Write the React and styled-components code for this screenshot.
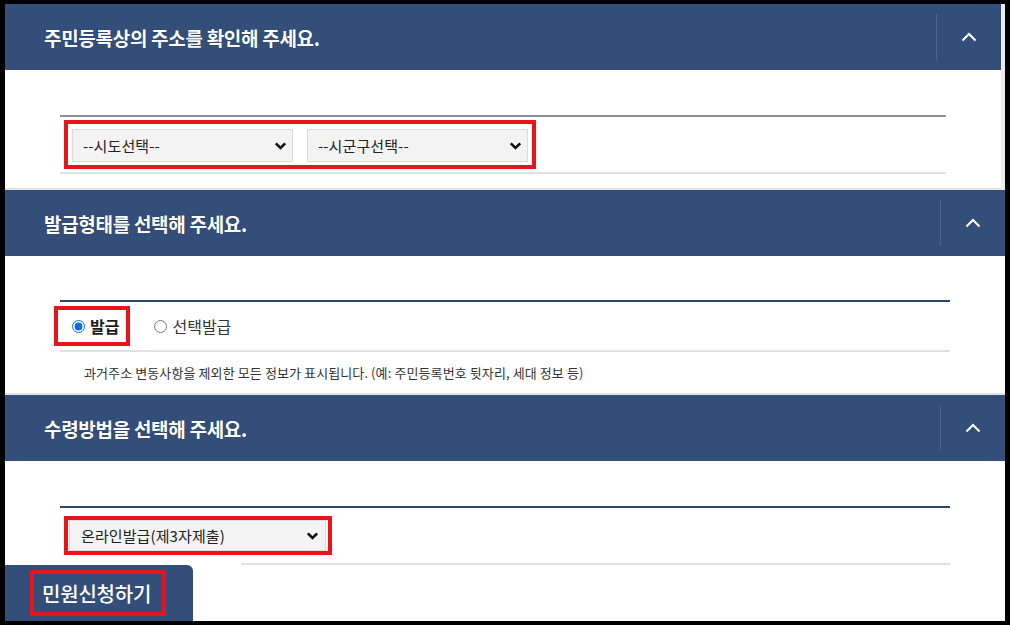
import React from 'react'
import styled, { createGlobalStyle } from 'styled-components'

const GlobalStyle = createGlobalStyle`
  html, body {
    margin: 0;
    padding: 0;
    background: #fff;
  }
  body {
    font-family: "Noto Sans CJK KR", "Noto Sans", sans-serif;
  }
`

const NAVY = '#344e7a'
const RED = '#e8141c'

const Frame = styled.div`
  width: 1010px;
  height: 625px;
  box-sizing: border-box;
  border: solid #000;
  border-width: 4px 5px 4px 5px;
  background: #fff;
  display: flex;
  flex-direction: column;
  overflow: hidden;
`

const Section = styled.section`
  display: flex;
  flex-direction: column;
  ${props => props.$gutter && 'border-right: 4px solid #ececec;'}
`

const Header = styled.div`
  height: 66px;
  background: ${NAVY};
  display: flex;
  align-items: center;
`

const Title = styled.h2`
  flex: 1;
  margin: 0;
  padding-left: 39px;
  color: #fff;
  font-size: 19px;
  font-weight: 700;
  letter-spacing: -0.3px;
  line-height: 1;
  text-shadow: 0 0 1px rgba(10, 20, 40, 0.5);
`

const Toggle = styled.button`
  width: 65px;
  align-self: stretch;
  margin: 10px 0;
  padding: 0;
  border: 0;
  border-left: 1px solid #4a6391;
  background: transparent;
  display: flex;
  align-items: center;
  justify-content: center;
  cursor: pointer;
`

const Body = styled.div`
  padding: ${props => props.$top}px 55px ${props => props.$bottom}px 55px;
  ${props => props.$closed && 'border-bottom: 2px solid #e3e3e3;'}
`

const Rule = styled.div`
  height: 2px;
  background: ${props => props.$tone || '#e2e2e2'};
  margin-left: ${props => props.$indent || 0}px;
`

const Row = styled.div`
  height: ${props => props.$h}px;
  display: flex;
  align-items: center;
`

const Highlight = styled.div`
  display: inline-flex;
  align-items: center;
  gap: ${props => props.$gap || 0}px;
  border: 4px solid ${RED};
  padding: ${props => props.$pad || '0'};
  margin-left: ${props => props.$shift || 0}px;
`

const SelectBox = styled.div`
  position: relative;
  width: ${props => props.$w}px;
  height: ${props => props.$h}px;
`

const Select = styled.select`
  appearance: none;
  width: 100%;
  height: 100%;
  box-sizing: border-box;
  margin: 0;
  padding: 0 30px 0 ${props => props.$indent || 10}px;
  border: 1px solid #dcdcdc;
  border-radius: 0;
  background: #f3f3f3;
  color: #222;
  font-family: "Noto Sans CJK KR", "Noto Sans", sans-serif;
  font-size: 15px;
  letter-spacing: 0.1px;
  outline: none;
`

const SelectArrow = styled.svg`
  position: absolute;
  right: ${props => props.$right || 6}px;
  top: 50%;
  transform: translateY(-50%);
  pointer-events: none;
`

const Options = styled.div`
  display: flex;
  align-items: center;
  gap: 24px;
`

const Choice = styled.label`
  display: inline-flex;
  align-items: center;
  gap: 5px;
  height: ${props => (props.$strong ? '32px' : 'auto')};
  font-size: 16px;
  letter-spacing: 0;
  color: ${props => (props.$strong ? '#1d1d1d' : '#333')};
  font-weight: ${props => (props.$strong ? 700 : 400)};
  line-height: 1;
  cursor: pointer;
`

const Radio = styled.input`
  width: 13px;
  height: 13px;
  margin: 0;
  accent-color: #0a6cf0;
`

const Note = styled.p`
  margin: 0;
  height: 41px;
  display: flex;
  align-items: center;
  padding-left: 24px;
  font-size: 13px;
  letter-spacing: 0.1px;
  color: #333;
`

const Submit = styled.button`
  width: 188px;
  height: 56px;
  flex-shrink: 0;
  border: 0;
  border-radius: 0 6px 0 0;
  background: ${NAVY};
  padding: 0 0 0 25px;
  display: flex;
  align-items: center;
  cursor: pointer;
`

const SubmitLabel = styled.span`
  display: flex;
  align-items: center;
  height: 38px;
  padding: 0 11px 0 8px;
  color: #fff;
  font-family: "Noto Sans CJK KR", "Noto Sans", sans-serif;
  font-size: 20px;
  font-weight: 500;
  letter-spacing: -0.2px;
`

const ChevronUp = () => (
  <svg width="16" height="10" viewBox="0 0 16 10">
    <path d="M1.5 8.5 L8 2 L14.5 8.5" fill="none" stroke="#fff" strokeWidth="2" />
  </svg>
)

const Dropdown = ({ w, h, value, indent, right }) => (
  <SelectBox $w={w} $h={h}>
    <Select defaultValue={value} $indent={indent}>
      <option value={value}>{value}</option>
    </Select>
    <SelectArrow $right={right} width="13" height="9" viewBox="0 0 13 9">
      <path d="M1.8 1.8 L6.5 6.5 L11.2 1.8" fill="none" stroke="#111" strokeWidth="2.6" />
    </SelectArrow>
  </SelectBox>
)

const Panel = ({ title, gutter, children }) => (
  <Section $gutter={gutter}>
    <Header>
      <Title>{title}</Title>
      <Toggle aria-label="접기">
        <ChevronUp />
      </Toggle>
    </Header>
    {children}
  </Section>
)

export default function App() {
  return (
    <>
      <GlobalStyle />
      <Frame>
        <Panel title="주민등록상의 주소를 확인해 주세요." gutter>
          <Body $top={45} $bottom={14} $closed>
            <Rule $tone="#8391a9" />
            <Row $h={55}>
              <Highlight $shift={4} $gap={14} $pad="5px 4px 3px 4px">
                <Dropdown w={221} h={33} value="--시도선택--" />
                <Dropdown w={221} h={33} value="--시군구선택--" />
              </Highlight>
            </Row>
            <Rule />
          </Body>
        </Panel>

        <Panel title="발급형태를 선택해 주세요.">
          <Body $top={44} $bottom={0} $closed>
            <Rule $tone="#2e4470" />
            <Row $h={48}>
              <Options>
                <Highlight $shift={-6} $pad="0 7px 0 14px">
                  <Choice $strong>
                    <Radio type="radio" name="issue" defaultChecked />
                    발급
                  </Choice>
                </Highlight>
                <Choice>
                  <Radio type="radio" name="issue" />
                  선택발급
                </Choice>
              </Options>
            </Row>
            <Rule />
            <Note>과거주소 변동사항을 제외한 모든 정보가 표시됩니다. (예: 주민등록번호 뒷자리, 세대 정보 등)</Note>
          </Body>
        </Panel>

        <Panel title="수령방법을 선택해 주세요.">
          <Body $top={45} $bottom={0}>
            <Rule $tone="#2e4470" />
            <Row $h={55}>
              <Highlight $shift={4} $pad="0 2px 0 1px">
                <Dropdown w={257} h={31} value="온라인발급(제3자제출)" indent={11} right={7} />
              </Highlight>
            </Row>
            <Rule $indent={181} />
          </Body>
        </Panel>

        <Submit>
          <Highlight>
            <SubmitLabel>민원신청하기</SubmitLabel>
          </Highlight>
        </Submit>
      </Frame>
    </>
  )
}
